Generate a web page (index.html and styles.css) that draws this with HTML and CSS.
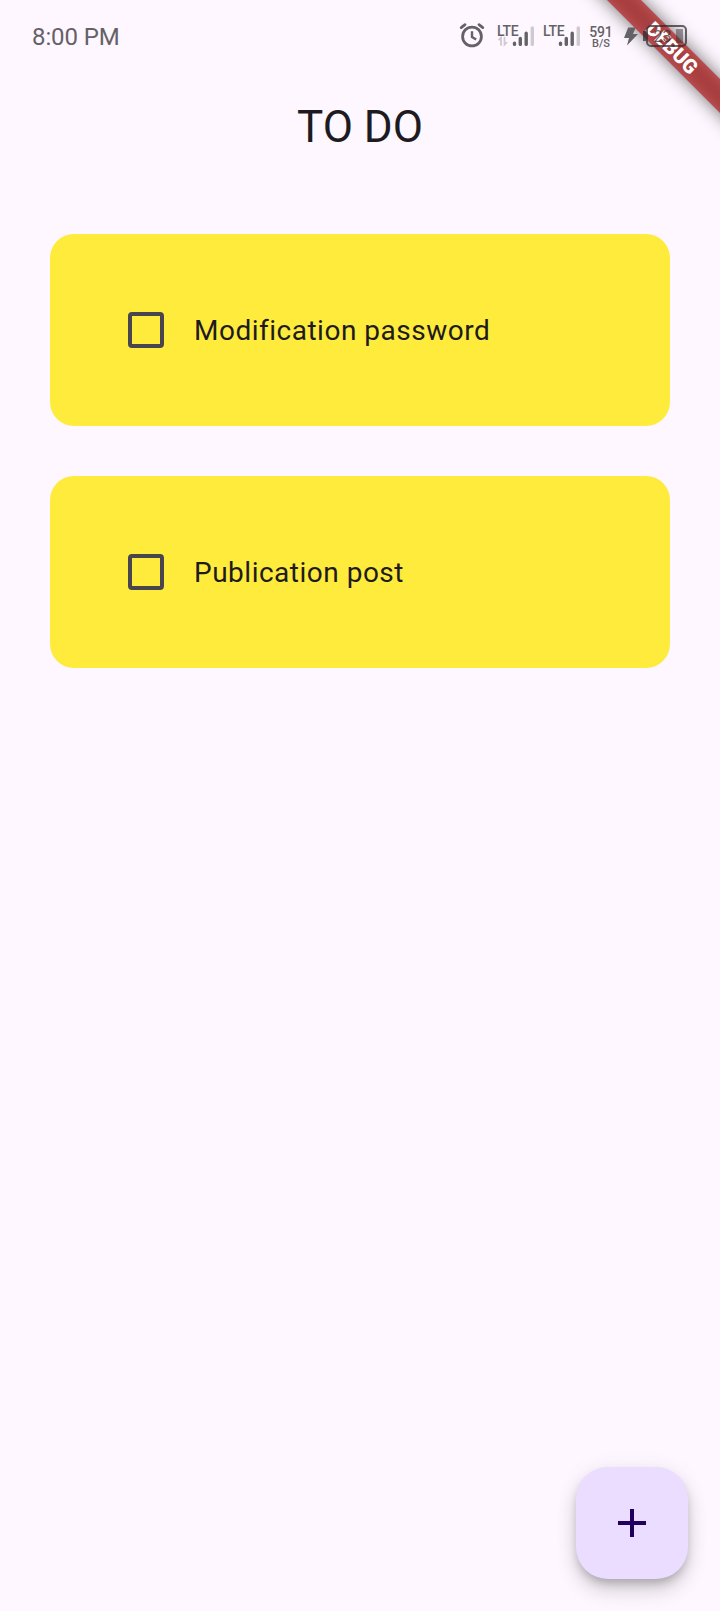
FILE: index.html
```html
<!DOCTYPE html>
<html lang="en">
<head>
<meta charset="utf-8">
<title>To do</title>
<link rel="stylesheet" href="styles.css">
</head>
<body>
<div class="screen">
  <header class="status-bar">
    <time class="clock">8:00 PM</time>
    <div class="status-icons">
      <svg class="alarm" width="26" height="26" viewBox="0 0 26 26" fill="none" stroke="currentColor">
        <circle cx="13" cy="14.5" r="9.4" stroke-width="2.8"/>
        <path d="M13 9.3v5.7l4.2 2.6" stroke-width="2.4"/>
        <path d="M2.2 5.6 6 2.7M23.8 5.6 20 2.7" stroke-width="2.8" stroke-linecap="round"/>
      </svg>
      <div class="signal">
        <span class="lte">LTE</span>
        <svg width="38" height="24" viewBox="0 0 38 24" stroke="currentColor" stroke-width="3.4" stroke-linecap="round">
          <path d="M17.5 19.4v-1.2M23.3 19.4v-6M29.2 19.4v-11.2"/>
          <path class="faint" d="M35.3 19.4v-16.5"/>
          <path class="faint" fill="none" stroke-width="1.8" d="M2 14.6l2-2V20M7.5 12.6v7l2-2"/>
        </svg>
      </div>
      <div class="signal">
        <span class="lte">LTE</span>
        <svg width="38" height="24" viewBox="0 0 38 24" stroke="currentColor" stroke-width="3.4" stroke-linecap="round">
          <path d="M17.5 19.4v-1.2M23.3 19.4v-6M29.2 19.4v-11.2"/>
          <path class="faint" d="M35.3 19.4v-16.5"/>
        </svg>
      </div>
      <div class="speed"><span class="rate">591</span><span class="unit">B/S</span></div>
      <svg class="bolt" width="14" height="19" viewBox="0 0 14 19"><path fill="currentColor" d="M4.2.5h7.6L9 7h5L3 18.5 5 11H0z"/></svg>
      <div class="battery"><span class="level">23</span></div>
    </div>
  </header>
  <h1 class="title">TO DO</h1>
  <main class="list">
    <label class="card"><input class="check" type="checkbox"><span>Modification password</span></label>
    <label class="card"><input class="check" type="checkbox"><span>Publication post</span></label>
  </main>
  <footer class="actions">
    <button class="fab" aria-label="Add">
      <svg width="28" height="28" viewBox="0 0 28 28"><path fill="currentColor" d="M12 0h4v12h12v4H16v12h-4V16H0v-4h12z"/></svg>
    </button>
  </footer>
  <div class="banner-shadow"></div>
  <div class="banner">DEBUG</div>
</div>
</body>
</html>
```
FILE: styles.css
```css
* { box-sizing: border-box; }
body { margin: 0; font-family: Roboto, sans-serif; color: #1d1b20; }
.screen {
  position: relative;
  display: flex;
  flex-direction: column;
  height: 1611px;
  overflow: hidden;
  background: #fef7ff;
}
.status-bar {
  position: relative;
  z-index: 3;
  display: flex;
  justify-content: space-between;
  height: 72px;
  padding: 0 33px 0 32px;
  color: #656267;
}
.clock { font-size: 24px; line-height: 28px; padding-top: 23px; letter-spacing: -.1px; }
.status-icons { display: flex; align-items: flex-start; }
.alarm { margin: 22px 12px 0 0; }
.signal { position: relative; height: 24px; margin: 25px 8px 0 0; }
.signal svg { display: block; }
.lte {
  position: absolute;
  left: 0;
  top: -2px;
  font-size: 14px;
  line-height: 16px;
  font-weight: 500;
  letter-spacing: -.3px;
}
.faint { opacity: .3; }
.speed { display: flex; flex-direction: column; align-items: center; width: 24px; margin: 24px 12px 0 0; }
.rate { font-size: 14px; line-height: 16px; font-weight: 500; letter-spacing: -.2px; }
.unit { font-size: 11px; line-height: 7px; font-weight: 500; }
.bolt { margin: 27px 8px 0 -1px; }
.battery {
  position: relative;
  width: 41px;
  height: 22px;
  margin-top: 25px;
  border: 2px solid rgb(45 42 47 / .72);
  border-radius: 5px;
  text-align: center;
}
.battery::before { content: ""; position: absolute; left: -5px; top: 4px; width: 3px; height: 10px; background: rgb(45 42 47 / .72); }
.battery::after { content: ""; position: absolute; right: 2px; top: 2px; width: 7px; height: 14px; background: rgb(45 42 47 / .45); }
.level { display: block; font-size: 16px; line-height: 19px; margin-right: 8px; color: rgb(45 42 47 / .72); }
.title { margin: 30px 0 81px; font-size: 44px; font-weight: 400; line-height: 51px; text-align: center; }
.list { display: flex; flex-direction: column; gap: 50px; padding: 0 50px; }
.card {
  display: flex;
  align-items: center;
  gap: 30px;
  height: 192px;
  padding-left: 78px;
  border-radius: 24px;
  background: #ffeb3b;
  font-size: 28px;
  letter-spacing: .5px;
}
.check { appearance: none; width: 36px; height: 36px; margin: 0; border: 4px solid #49454f; border-radius: 4px; }
.actions { display: flex; justify-content: flex-end; margin-top: auto; padding: 0 32px 32px; }
.fab {
  display: grid;
  place-items: center;
  width: 112px;
  height: 112px;
  padding: 0;
  border: 0;
  border-radius: 32px;
  background: #eaddff;
  color: #21005d;
  box-shadow: 0 6px 10px -2px rgb(0 0 0 / .2), 0 12px 20px rgb(0 0 0 / .14), 0 2px 24px rgb(0 0 0 / .06);
}
.banner, .banner-shadow {
  position: absolute;
  left: 552px;
  top: 36px;
  width: 240px;
  height: 24px;
  transform: rotate(45deg);
}
.banner-shadow { z-index: 1; background: rgb(0 0 0 / .55); filter: blur(9px); }
.banner {
  z-index: 2;
  background: rgb(183 28 28 / .68);
  color: #fff;
  font-size: 20px;
  font-weight: 900;
  line-height: 24px;
  text-align: center;
}
```
